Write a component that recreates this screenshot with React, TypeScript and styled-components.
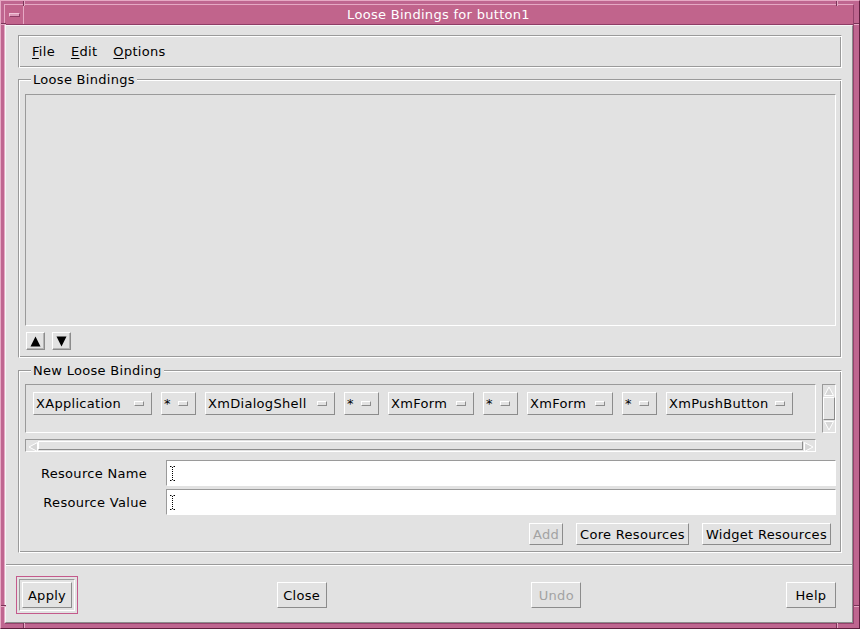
import React from 'react';
import styled, { createGlobalStyle } from 'styled-components';

const GlobalStyle = createGlobalStyle`
  html, body { margin: 0; padding: 0; background: #e2e2e2; }
  body {
    font-family: "DejaVu Sans", Verdana, sans-serif;
    font-size: 13px;
    letter-spacing: 0.3px;
    color: #000;
  }
  * { box-sizing: border-box; }
`;

// window manager frame
const Window = styled.div`
  position: relative;
  display: flex;
  width: 860px;
  height: 629px;
  padding: 3px 5px 4px 3px;
  background: #bf6690;
  border: 1px solid;
  border-color: #e6a9c4 #5e1f3e #5e1f3e #e6a9c4;
`;

const Frame = styled.div`
  flex: 1;
  display: flex;
  flex-direction: column;
  border: 1px solid;
  border-color: #e6a9c4 #93426b #93426b #e6a9c4;
`;

const Tick = styled.span<{ $vertical?: boolean }>`
  position: absolute;
  width: ${p => (p.$vertical ? '2px' : '5px')};
  height: ${p => (p.$vertical ? '5px' : '2px')};
  border-${p => (p.$vertical ? 'left' : 'top')}: 1px solid #7a3458;
  border-${p => (p.$vertical ? 'right' : 'bottom')}: 1px solid #e6a9c4;
`;

const TitleBar = styled.div`
  display: flex;
  height: 20px;
  background: #c1648c;
  border-bottom: 1px solid #8e3d66;
`;

const WinMenuBtn = styled.div`
  width: 19px;
  display: flex;
  align-items: center;
  justify-content: center;
  border-right: 1px solid #e6a9c4;
`;

const Dash = styled.span`
  width: 11px;
  height: 4px;
  background: #dc9ab8;
  border: 1px solid;
  border-color: #f0c4d8 #8e3d66 #8e3d66 #f0c4d8;
`;

const TitleText = styled.div`
  flex: 1;
  text-align: center;
  color: #fff;
  line-height: 19px;
`;

const Client = styled.div`
  flex: 1;
  display: flex;
  flex-direction: column;
  background: #e2e2e2;
  border: 1px solid;
  border-color: #f6f6f6 #8c8c8c #8c8c8c #f6f6f6;
`;

const Body = styled.div`
  padding: 9px 10px 0 12px;
`;

const MenuBar = styled.div`
  display: flex;
  align-items: center;
  height: 33px;
  padding-left: 5px;
  border: 1px solid;
  border-color: #9a9a9a #fff #fff #9a9a9a;
  box-shadow: inset 1px 1px 0 #fff, inset -1px -1px 0 #9a9a9a;
`;

const MenuItem = styled.span`
  padding: 0 8px;
  u { text-underline-offset: 2px; }
`;

const Group = styled.fieldset<{ $top: number }>`
  margin: ${p => p.$top}px 0 0;
  padding: 0 5px 7px 6px;
  min-width: 0;
  border: 1px solid;
  border-color: #9a9a9a #fff #fff #9a9a9a;
  box-shadow: inset 1px 1px 0 #fff, inset -1px -1px 0 #9a9a9a;
`;

const GroupTitle = styled.legend`
  margin-left: 6px;
  padding: 0 2px;
  height: 15px;
  line-height: 15px;
  background: #e2e2e2;
`;

const Sunken = styled.div`
  border: 1px solid;
  border-color: #9a9a9a #fff #fff #9a9a9a;
`;

const List = styled(Sunken)`
  height: 232px;
  margin-top: 7px;
`;

const ArrowRow = styled.div`
  display: flex;
  gap: 7px;
  margin-top: 6px;
  padding-left: 1px;
`;

const ArrowBtn = styled.div`
  width: 19px;
  height: 18px;
  display: flex;
  align-items: center;
  justify-content: center;
  border: 1px solid;
  border-color: #fff #8c8c8c #8c8c8c #fff;
  box-shadow: inset -1px -1px 0 #b4b4b4;
`;

const ScrollRow = styled.div`
  display: flex;
  gap: 6px;
  height: 49px;
  margin-top: 6px;
`;

const Clip = styled(Sunken)`
  flex: 1;
  display: flex;
  align-items: flex-start;
  gap: 9px;
  padding: 7px 0 0 7px;
  overflow: hidden;
`;

const OptionMenu = styled.div<{ $w: number }>`
  flex: none;
  width: ${p => p.$w}px;
  height: 23px;
  display: flex;
  align-items: center;
  padding: 0 7px 0 2px;
  border: 1px solid;
  border-color: #fff #8c8c8c #8c8c8c #fff;
`;

const OptionLabel = styled.span`
  flex: 1;
  white-space: nowrap;
`;

const Indicator = styled.span`
  width: 10px;
  height: 5px;
  border: 1px solid;
  border-color: #fff #8c8c8c #8c8c8c #fff;
`;

const VScroll = styled(Sunken)`
  width: 14px;
  display: flex;
  flex-direction: column;
`;

const HScroll = styled(Sunken)`
  display: flex;
  width: calc(100% - 20px);
  height: 13px;
  margin-top: 6px;
  padding: 1px;
`;

const Slider = styled.div`
  flex: 1;
  border: 1px solid;
  border-color: #fff #8c8c8c #8c8c8c #fff;
`;

const ScrollArrow = styled.div<{ $size: number }>`
  flex: none;
  width: ${p => p.$size}px;
  height: ${p => p.$size}px;
  display: flex;
  align-items: center;
  justify-content: center;
`;

const FormRow = styled.div<{ $top: number }>`
  display: flex;
  align-items: center;
  height: 26px;
  margin-top: ${p => p.$top}px;
`;

const FieldLabel = styled.span`
  width: 122px;
  margin-right: 19px;
  text-align: right;
  white-space: nowrap;
`;

const TextField = styled.div`
  flex: 1;
  height: 26px;
  display: flex;
  align-items: center;
  padding-left: 3px;
  background: #fff;
  border: 1px solid;
  border-color: #9a9a9a #fff #fff #9a9a9a;
`;

const ActionRow = styled.div`
  display: flex;
  justify-content: flex-end;
  gap: 13px;
  margin-top: 8px;
  padding-right: 5px;
`;

const PushButton = styled.div<{ $disabled?: boolean }>`
  height: 22px;
  display: flex;
  align-items: center;
  padding: 0 3px;
  color: ${p => (p.$disabled ? '#a3a3a3' : '#000')};
  border: 1px solid;
  border-color: #fff #8c8c8c #8c8c8c #fff;
  white-space: nowrap;
`;

const Separator = styled.div`
  margin-top: 11px;
  height: 2px;
  border-top: 1px solid #9a9a9a;
  border-bottom: 1px solid #fff;
`;

const ButtonBar = styled.div`
  display: flex;
  justify-content: space-between;
  align-items: flex-start;
  padding: 16px 16px 0;
`;

const DialogButton = styled(PushButton)`
  width: 50px;
  height: 26px;
  justify-content: center;
  padding: 0;
`;

const DefaultRing = styled.div`
  display: flex;
  margin: -3px;
  padding: 2px;
  border: 1px solid;
  border-color: #9a9a9a #fff #fff #9a9a9a;
  outline: 1px solid #c45a8c;
  outline-offset: 2px;
`;

const Triangle = ({ dir }: { dir: 'up' | 'down' }) => (
  <svg width="11" height="11" viewBox="0 0 11 11">
    <polygon points={dir === 'up' ? '5.5,0.5 10.5,10.5 0.5,10.5' : '0.5,0.5 10.5,0.5 5.5,10.5'} fill="#000" />
  </svg>
);

type Dir = 'up' | 'down' | 'left' | 'right';
const ghostPoints: Record<Dir, string> = {
  up: '5,1 9.5,9.5 0.5,9.5',
  down: '0.5,0.5 9.5,0.5 5,9',
  left: '1,5 9.5,0.5 9.5,9.5',
  right: '0.5,0.5 9,5 0.5,9.5',
};

const GhostArrow = ({ dir }: { dir: Dir }) => (
  <svg width="10" height="10" viewBox="0 0 10 10">
    <polygon points={ghostPoints[dir]} fill="#d6d6d6" stroke="#fff" strokeWidth="1" />
  </svg>
);

const IBeam = () => (
  <svg width="5" height="15" viewBox="0 0 5 15">
    <path d="M0 0.5h1.5M3.5 0.5H5M0 14.5h1.5M3.5 14.5H5" stroke="#000" />
    <line x1="2.5" y1="1" x2="2.5" y2="14" stroke="#000" strokeDasharray="1 1" />
  </svg>
);

const bindings = [
  { label: 'XApplication', w: 119 },
  { label: '*', w: 35 },
  { label: 'XmDialogShell', w: 130 },
  { label: '*', w: 35 },
  { label: 'XmForm', w: 86 },
  { label: '*', w: 35 },
  { label: 'XmForm', w: 86 },
  { label: '*', w: 35 },
  { label: 'XmPushButton', w: 127 },
];

export default function App() {
  return (
    <>
      <GlobalStyle />
      <Window>
        <Tick $vertical style={{ left: 22, top: 0 }} />
        <Tick $vertical style={{ left: 835, top: 0 }} />
        <Tick $vertical style={{ left: 22, bottom: 0 }} />
        <Tick $vertical style={{ left: 835, bottom: 0 }} />
        <Tick style={{ left: 0, top: 22 }} />
        <Tick style={{ left: 0, top: 604 }} />
        <Tick style={{ right: 0, top: 22 }} />
        <Tick style={{ right: 0, top: 604 }} />
        <Frame>
          <TitleBar>
            <WinMenuBtn>
              <Dash />
            </WinMenuBtn>
            <TitleText>Loose Bindings for button1</TitleText>
          </TitleBar>
          <Client>
            <Body>
              <MenuBar>
                <MenuItem><u>F</u>ile</MenuItem>
                <MenuItem><u>E</u>dit</MenuItem>
                <MenuItem><u>O</u>ptions</MenuItem>
              </MenuBar>

              <Group $top={4}>
                <GroupTitle>Loose Bindings</GroupTitle>
                <List />
                <ArrowRow>
                  <ArrowBtn><Triangle dir="up" /></ArrowBtn>
                  <ArrowBtn><Triangle dir="down" /></ArrowBtn>
                </ArrowRow>
              </Group>

              <Group $top={5}>
                <GroupTitle>New Loose Binding</GroupTitle>
                <ScrollRow>
                  <Clip>
                    {bindings.map((b, i) => (
                      <OptionMenu key={i} $w={b.w}>
                        <OptionLabel>{b.label}</OptionLabel>
                        <Indicator />
                      </OptionMenu>
                    ))}
                  </Clip>
                  <VScroll>
                    <ScrollArrow $size={12}><GhostArrow dir="up" /></ScrollArrow>
                    <Slider />
                    <ScrollArrow $size={12}><GhostArrow dir="down" /></ScrollArrow>
                  </VScroll>
                </ScrollRow>
                <HScroll>
                  <ScrollArrow $size={11}><GhostArrow dir="left" /></ScrollArrow>
                  <Slider />
                  <ScrollArrow $size={11}><GhostArrow dir="right" /></ScrollArrow>
                </HScroll>
                <FormRow $top={8}>
                  <FieldLabel>Resource Name</FieldLabel>
                  <TextField><IBeam /></TextField>
                </FormRow>
                <FormRow $top={3}>
                  <FieldLabel>Resource Value</FieldLabel>
                  <TextField><IBeam /></TextField>
                </FormRow>
                <ActionRow>
                  <PushButton $disabled>Add</PushButton>
                  <PushButton>Core Resources</PushButton>
                  <PushButton>Widget Resources</PushButton>
                </ActionRow>
              </Group>
            </Body>
            <Separator />
            <ButtonBar>
              <DefaultRing>
                <DialogButton>Apply</DialogButton>
              </DefaultRing>
              <DialogButton>Close</DialogButton>
              <DialogButton $disabled>Undo</DialogButton>
              <DialogButton>Help</DialogButton>
            </ButtonBar>
          </Client>
        </Frame>
      </Window>
    </>
  );
}
